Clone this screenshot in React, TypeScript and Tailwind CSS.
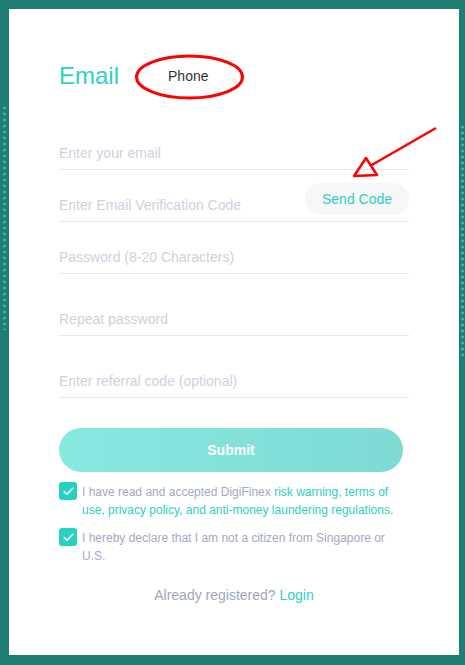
import { Check } from 'lucide-react'

const Field = ({ placeholder, className = '' }: { placeholder: string; className?: string }) => (
  <div className={`border-b border-[#e6e6e6] flex items-center ${className}`}>
    <input
      placeholder={placeholder}
      className="h-8 flex-1 bg-transparent outline-none text-[14px] text-[#333] placeholder:text-[#cdd2dd]"
    />
  </div>
)

const CheckRow = ({ children, className = '' }: { children: React.ReactNode; className?: string }) => (
  <div className={`w-[344px] flex items-start gap-[5px] ${className}`}>
    <div className="mt-[-1px] w-[18px] h-[18px] shrink-0 rounded-[3px] bg-[#27d1c2] flex items-center justify-center">
      <Check size={13} strokeWidth={3} className="text-white" />
    </div>
    <p className="text-[12px] leading-[18px] text-[#a3a9c4]">{children}</p>
  </div>
)

export default function App() {
  return (
    <div className="relative w-[465px] h-[665px] flex bg-[#1e7e72] font-['Liberation_Sans',Arial,sans-serif]">
      {/* left border with dots */}
      <div className="w-[9px] flex flex-col">
        <div className="mt-[105px] ml-[1px] h-[225px] bg-[radial-gradient(circle,#3fb0a5_1.3px,transparent_1.8px)] bg-[length:7px_6px]" />
      </div>

      <div className="flex-1 flex pt-[9px] pb-[10px]">
        <div className="flex-1 bg-white pt-[51px] px-[50px]">
          <div className="flex items-center h-8">
            <span className="text-[24px] leading-8 text-[#2fd1c3]">Email</span>
            <span className="ml-[49px] text-[14px] leading-5 text-[#333]">Phone</span>
          </div>

          <Field placeholder="Enter your email" className="mt-[45px]" />

          <div className="mt-[13px] border-b border-[#e6e6e6] flex items-end">
            <input
              placeholder="Enter Email Verification Code"
              className="h-8 flex-1 min-w-0 bg-transparent outline-none text-[14px] placeholder:text-[#cdd2dd]"
            />
            <button className="mb-[6px] h-8 w-[104px] rounded-full bg-[#f6f7f8] text-[14px] text-[#2fcfc1]">
              Send Code
            </button>
          </div>

          <Field placeholder="Password (8-20 Characters)" className="mt-[19px]" />
          <Field placeholder="Repeat password" className="mt-[29px]" />
          <Field placeholder="Enter referral code (optional)" className="mt-[29px]" />

          <button className="mt-[30px] w-[344px] h-11 rounded-full bg-linear-to-r from-[#88e9e1] to-[#7edad2] text-white text-[14px] font-bold">
            Submit
          </button>

          <CheckRow className="mt-[11px]">
            I have read and accepted DigiFinex{' '}
            <span className="text-[#2fcfc1]">
              risk warning, terms of use, privacy policy, and anti-money laundering regulations.
            </span>
          </CheckRow>

          <CheckRow className="mt-[10px]">
            I hereby declare that I am not a citizen from Singapore or U.S.
          </CheckRow>

          <p className="mt-[20px] text-center text-[14px] leading-5 text-[#a0a6c0]">
            Already registered? <span className="text-[#2fcfc1]">Login</span>
          </p>
        </div>
      </div>

      {/* right border with dots */}
      <div className="w-[6px] flex flex-col">
        <div className="mt-[124px] ml-[1px] h-[235px] bg-[radial-gradient(circle,#3fb0a5_1.3px,transparent_1.8px)] bg-[length:5px_6px]" />
      </div>

      {/* red annotations */}
      <svg className="absolute inset-0 pointer-events-none" width={465} height={665}>
        <ellipse cx={189.5} cy={77} rx={53} ry={21} fill="none" stroke="#ff0000" strokeWidth={3} />
        <line x1={436} y1={128} x2={370} y2={166} stroke="#ff0000" strokeWidth={2.5} />
        <polygon points="354,176 366,158 377,175" fill="none" stroke="#ff0000" strokeWidth={2.5} strokeLinejoin="round" />
      </svg>
    </div>
  )
}
